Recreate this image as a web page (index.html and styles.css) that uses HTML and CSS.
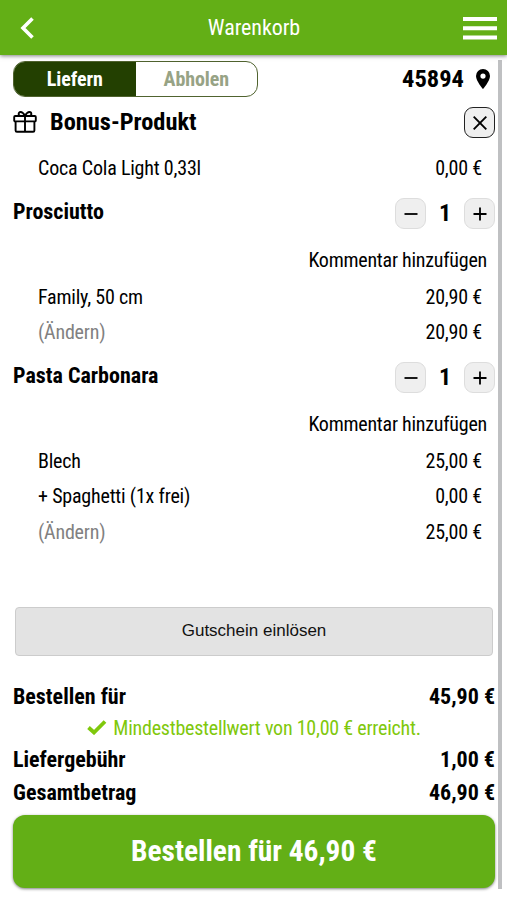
FILE: index.html
```html
<!DOCTYPE html>
<html lang="de">
<head>
<meta charset="utf-8">
<title>Warenkorb</title>
<link rel="stylesheet" href="styles.css">
</head>
<body>
<header class="topbar">
  <svg class="back" viewBox="0 0 14 22"><path d="M12.5 1.5 3 11l9.5 9.5" fill="none" stroke="#fff" stroke-width="3.6"/></svg>
  <h1 class="title"><span class="t">Warenkorb</span></h1>
  <svg class="menu" viewBox="0 0 34 24"><path d="M0 2h34M0 11.2h34M0 20.4h34" stroke="#fff" stroke-width="4"/></svg>
</header>
<div class="shell">
<main class="cart">
  <div class="mode">
    <div class="toggle"><div class="tab active"><span class="t">Liefern</span></div><div class="tab"><span class="t">Abholen</span></div></div>
    <div class="zip"><span class="t">45894</span>
      <svg class="pin" viewBox="0 0 14 20"><path fill-rule="evenodd" d="M7 0a7 7 0 0 0-7 7c0 5 7 13 7 13s7-8 7-13a7 7 0 0 0-7-7Zm0 4.5a2.6 2.6 0 1 1 0 5.2a2.6 2.6 0 0 1 0-5.2Z"/></svg></div>
  </div>
  <div class="bonus">
    <svg class="gift" viewBox="0 0 24 22" fill="none" stroke="#000" stroke-width="1.9"><rect x="1.2" y="5" width="21.6" height="5.4" rx="1"/><path d="M2.6 10.4v9q0 1.3 1.3 1.3h16.2q1.3 0 1.3-1.3v-9M12 5v15.7M12 5C10 1 8.6 1 7.6 1C5 1 5 5 7.6 5M12 5c2-4 3.400-4 4.400-4C19 1 19 5 16.400 5"/></svg>
    <h2 class="bonus-title"><span class="t">Bonus-Produkt</span></h2>
    <button class="close" aria-label="Entfernen"><svg viewBox="0 0 14 14"><path d="m.7.700 12.600 12.600M13.300.700.700 13.300" stroke="#000" stroke-width="1.900"/></svg></button>
  </div>
  <div class="line free"><span class="t">Coca Cola Light 0,33l</span><span class="t">0,00 €</span></div>

  <section class="item">
    <div class="head"><h3 class="name"><span class="t">Prosciutto</span></h3>
      <button class="step" aria-label="Weniger"><svg viewBox="0 0 14 14"><path d="M.5 7h13" stroke="#000" stroke-width="1.8"/></svg></button><span class="qty">1</span><button class="step" aria-label="Mehr"><svg viewBox="0 0 14 14"><path d="M.5 7h13M7 .5v13" stroke="#000" stroke-width="1.8"/></svg></button></div>
    <div class="comment"><span class="t">Kommentar hinzufügen</span></div>
    <div class="line"><span class="t">Family, 50 cm</span><span class="t">20,90 €</span></div>
    <div class="line"><span class="t muted">(Ändern)</span><span class="t">20,90 €</span></div>
  </section>
  <section class="item">
    <div class="head"><h3 class="name"><span class="t">Pasta Carbonara</span></h3>
      <button class="step" aria-label="Weniger"><svg viewBox="0 0 14 14"><path d="M.5 7h13" stroke="#000" stroke-width="1.8"/></svg></button><span class="qty">1</span><button class="step" aria-label="Mehr"><svg viewBox="0 0 14 14"><path d="M.5 7h13M7 .5v13" stroke="#000" stroke-width="1.8"/></svg></button></div>
    <div class="comment"><span class="t">Kommentar hinzufügen</span></div>
    <div class="line"><span class="t">Blech</span><span class="t">25,00 €</span></div>
    <div class="line"><span class="t">+ Spaghetti (1x frei)</span><span class="t">0,00 €</span></div>
    <div class="line"><span class="t muted">(Ändern)</span><span class="t">25,00 €</span></div>
  </section>

  <button class="voucher">Gutschein einlösen</button>

  <div class="sum"><span class="t">Bestellen für</span><span class="t">45,90 €</span></div>
  <div class="minimum"><svg class="check" viewBox="0 0 20 15"><path d="m1.500 7.500 5.500 5 11-11" fill="none" stroke="#7fc80c" stroke-width="3.800"/></svg><span class="t">Mindestbestellwert von 10,00 € erreicht.</span></div>
  <div class="sum"><span class="t">Liefergebühr</span><span class="t">1,00 €</span></div>
  <div class="sum"><span class="t">Gesamtbetrag</span><span class="t">46,90 €</span></div>
  <button class="order"><span class="t">Bestellen für 46,90 €</span></button>
</main>
<div class="scrollbar"></div>
</div>
</body>
</html>
```
FILE: styles.css
```css
* { box-sizing: border-box; }
body { margin: 0; width: 507px; height: 900px; overflow: hidden; background: #fff; color: #000; font: 450 20px/24px "Roboto Condensed", Roboto, sans-serif; font-stretch: 75%; }
h1, h2, h3 { margin: 0; font-weight: inherit; }
button { font-family: inherit; font-stretch: inherit; padding: 0; margin: 0; }
svg { display: block; flex: none; }
.t { display: block; white-space: nowrap; }
.topbar { height: 55px; background: #63af16; box-shadow: 0 1px 4px rgba(0,0,0,.5); display: flex; align-items: center; justify-content: space-between; padding: 1px 10px 0 20px; color: #fff; position: relative; }
.back { width: 14px; height: 22px; }
.menu { width: 34px; height: 24px; margin-top: 2px; }
.title { font-size: 22px; margin-left: 11px; letter-spacing: -.07px; }
.shell { display: flex; height: 845px; }
.cart { width: 498px; padding: 6px 3px 0 13px; display: flex; flex-direction: column; }
.scrollbar { width: 4px; height: 829px; margin-top: 5px; background: #bfc0c2; }
.mode { height: 36px; display: flex; justify-content: space-between; align-items: center; }
.toggle { width: 245px; height: 36px; border: 1px solid #50632f; border-radius: 12px; display: flex; overflow: hidden; font-weight: 700; font-size: 20px; letter-spacing: -.1px; }
.tab { flex: 1; display: flex; align-items: center; justify-content: center; color: #97a385; }
.tab.active { background: #234001; color: #fff; }
.zip { display: flex; align-items: center; gap: 12px; font-size: 24.500px; font-weight: 700; padding-right: 5px; }
.pin { width: 14px; height: 20px; margin-bottom: 1px; }
.bonus { height: 51px; display: flex; align-items: center; }
.gift { width: 24px; height: 22px; margin-bottom: 1px; }
.bonus-title { flex: 1; margin-left: 13px; padding-bottom: 1px; font-size: 24.400px; font-weight: 700; }
.close { width: 31px; height: 31px; border: 1.5px solid #222; border-radius: 9px; background: #efefef; display: grid; place-items: center; }
.close svg { width: 14px; height: 14px; }
.line { height: 35.5px; display: flex; align-items: center; justify-content: space-between; padding: 0 13px 0 25px; letter-spacing: -.2px; }
.free { height: 41px; padding-bottom: 1px; }
.muted { color: #818181; }
.item { padding-bottom: 3px; }
.head { height: 49px; display: flex; align-items: center; }
.name { flex: 1; font-size: 22px; font-weight: 700; padding-bottom: 4px; }
.step { width: 31px; height: 31px; border: 1px solid #ddd; border-radius: 9px; background: #efefef; display: grid; place-items: center; }
.step svg { width: 14px; height: 14px; }
.qty { width: 38px; padding-bottom: 2px; display: flex; justify-content: center; font-size: 24px; font-weight: 700; }
.comment { height: 41px; padding: 3px 8px 0 0; display: flex; align-items: center; justify-content: flex-end; letter-spacing: -.24px; }
.voucher { height: 49px; margin: 54px 2px 25px; border: 1px solid #ccc; border-radius: 4px; background: #e3e3e3; font: 17px "Liberation Sans", Arial, sans-serif; color: #111; }
.sum { height: 33px; display: flex; align-items: center; justify-content: space-between; font-size: 22px; font-weight: 700; }
.minimum { height: 30px; padding-bottom: 2px; display: flex; align-items: center; justify-content: center; gap: 6px; color: #7fc80c; letter-spacing: -.23px; }
.check { width: 20px; height: 15px; }
.order { height: 73px; margin-top: 5px; border: 0; border-radius: 12px; background: #63af16; box-shadow: 0 1px 3px rgba(0,0,0,.5); color: #fff; font-size: 29.400px; font-weight: 700; display: flex; align-items: center; justify-content: center; padding-bottom: 1px; }
```
